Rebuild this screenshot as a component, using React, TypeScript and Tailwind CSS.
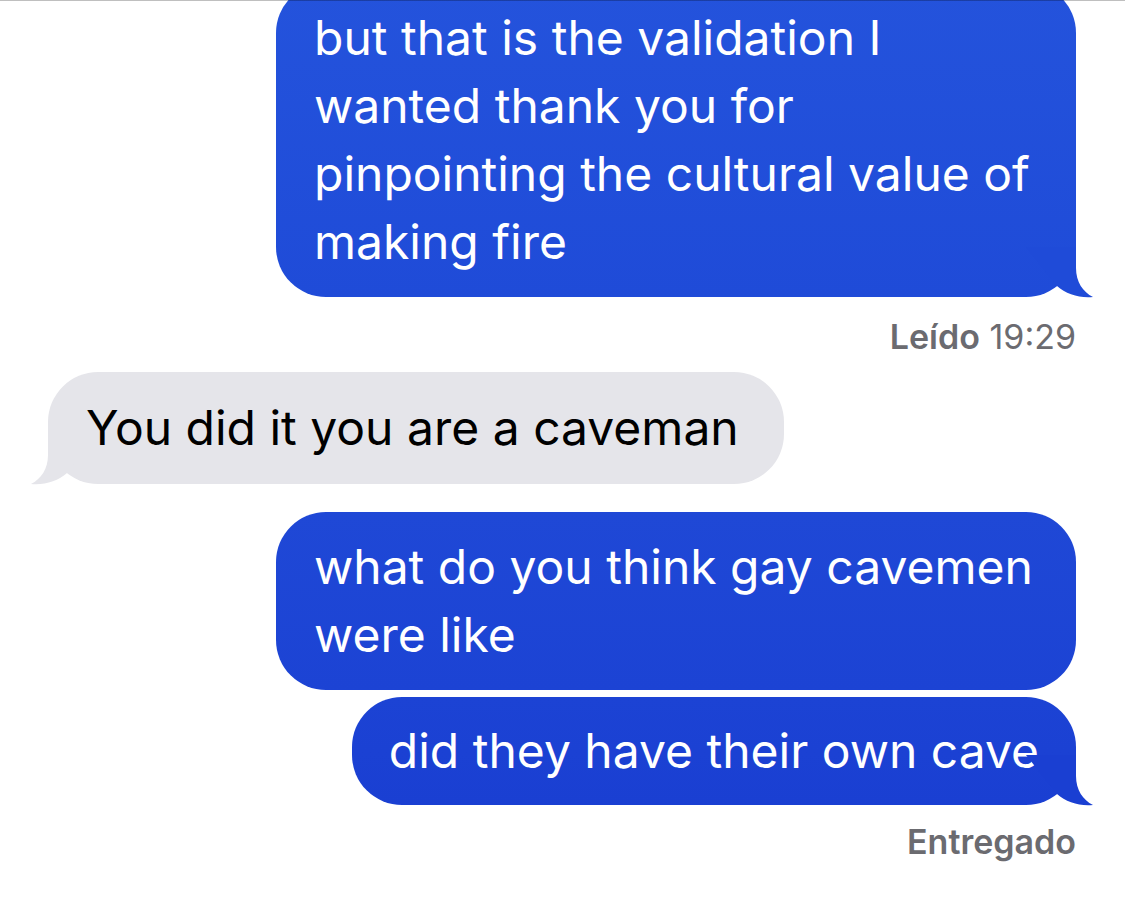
import React from "react";

type Side = "me" | "them";

const Tail: React.FC<{ side: Side; color: string }> = ({ side, color }) => (
  <svg
    width="70"
    height="51"
    viewBox="0 0 70 51"
    className={
      side === "me"
        ? "absolute -right-[20px] bottom-[-1px]"
        : "absolute -left-[20px] bottom-[-1px] -scale-x-100"
    }
  >
    <path
      d="M0 0 L50 0 L50 21 C50 35 57 45 67 50 C54 51.5 40 47 31 39 Z"
      fill={color}
    />
  </svg>
);

const Bubble: React.FC<{
  side: Side;
  lines: string[];
  bg: string;
  tailColor?: string;
  className?: string;
}> = ({ side, lines, bg, tailColor, className = "" }) => (
  <div
    className={`relative rounded-[50px] text-[48px] leading-[68px] whitespace-nowrap ${bg} ${className} ${
      side === "me" ? "text-white" : "text-black"
    }`}
  >
    {lines.map((l, i) => (
      <div key={i}>{l}</div>
    ))}
    {tailColor && <Tail side={side} color={tailColor} />}
  </div>
);

export default function App() {
  return (
    <div
      className="relative h-[897px] w-full overflow-hidden bg-white"
      style={{ fontFamily: "Inter, 'Noto Sans', sans-serif" }}
    >
      <div className="flex flex-col pl-[48px] pr-[49px]">
        <div className="-mt-[17px] flex justify-end">
          <Bubble
            side="me"
            className="w-[800px] px-[38px] py-[21px]"
            bg="bg-gradient-to-b from-[#2453dc] to-[#1f4bd8]"
            tailColor="#1f4bd8"
            lines={[
              "but that is the validation I",
              "wanted thank you for",
              "pinpointing the cultural value of",
              "making fire",
            ]}
          />
        </div>

        <div className="mt-[20px] text-right text-[34px] leading-[40px] text-[#6b6b70]">
          <span className="font-semibold">Leído</span> 19:29
        </div>

        <div className="mt-[15px] flex justify-start">
          <Bubble
            side="them"
            className="py-[22px] pl-[38px] pr-[45px]"
            bg="bg-[#e5e5ea]"
            tailColor="#e5e5ea"
            lines={["You did it you are a caveman"]}
          />
        </div>

        <div className="mt-[28px] flex justify-end">
          <Bubble
            side="me"
            className="w-[800px] px-[38px] py-[21px]"
            bg="bg-gradient-to-b from-[#1f48d6] to-[#1c43d4]"
            lines={["what do you think gay cavemen", "were like"]}
          />
        </div>

        <div className="mt-[7px] flex justify-end">
          <Bubble
            side="me"
            className="px-[37px] py-[20px]"
            bg="bg-gradient-to-b from-[#1c43d4] to-[#1a3fd2]"
            tailColor="#1a3fd2"
            lines={["did they have their own cave"]}
          />
        </div>

        <div className="mt-[17px] text-right text-[34px] font-semibold leading-[40px] text-[#6b6b70]">
          Entregado
        </div>
      </div>

      <div className="absolute inset-x-0 top-0 h-px bg-black/25" />
    </div>
  );
}
